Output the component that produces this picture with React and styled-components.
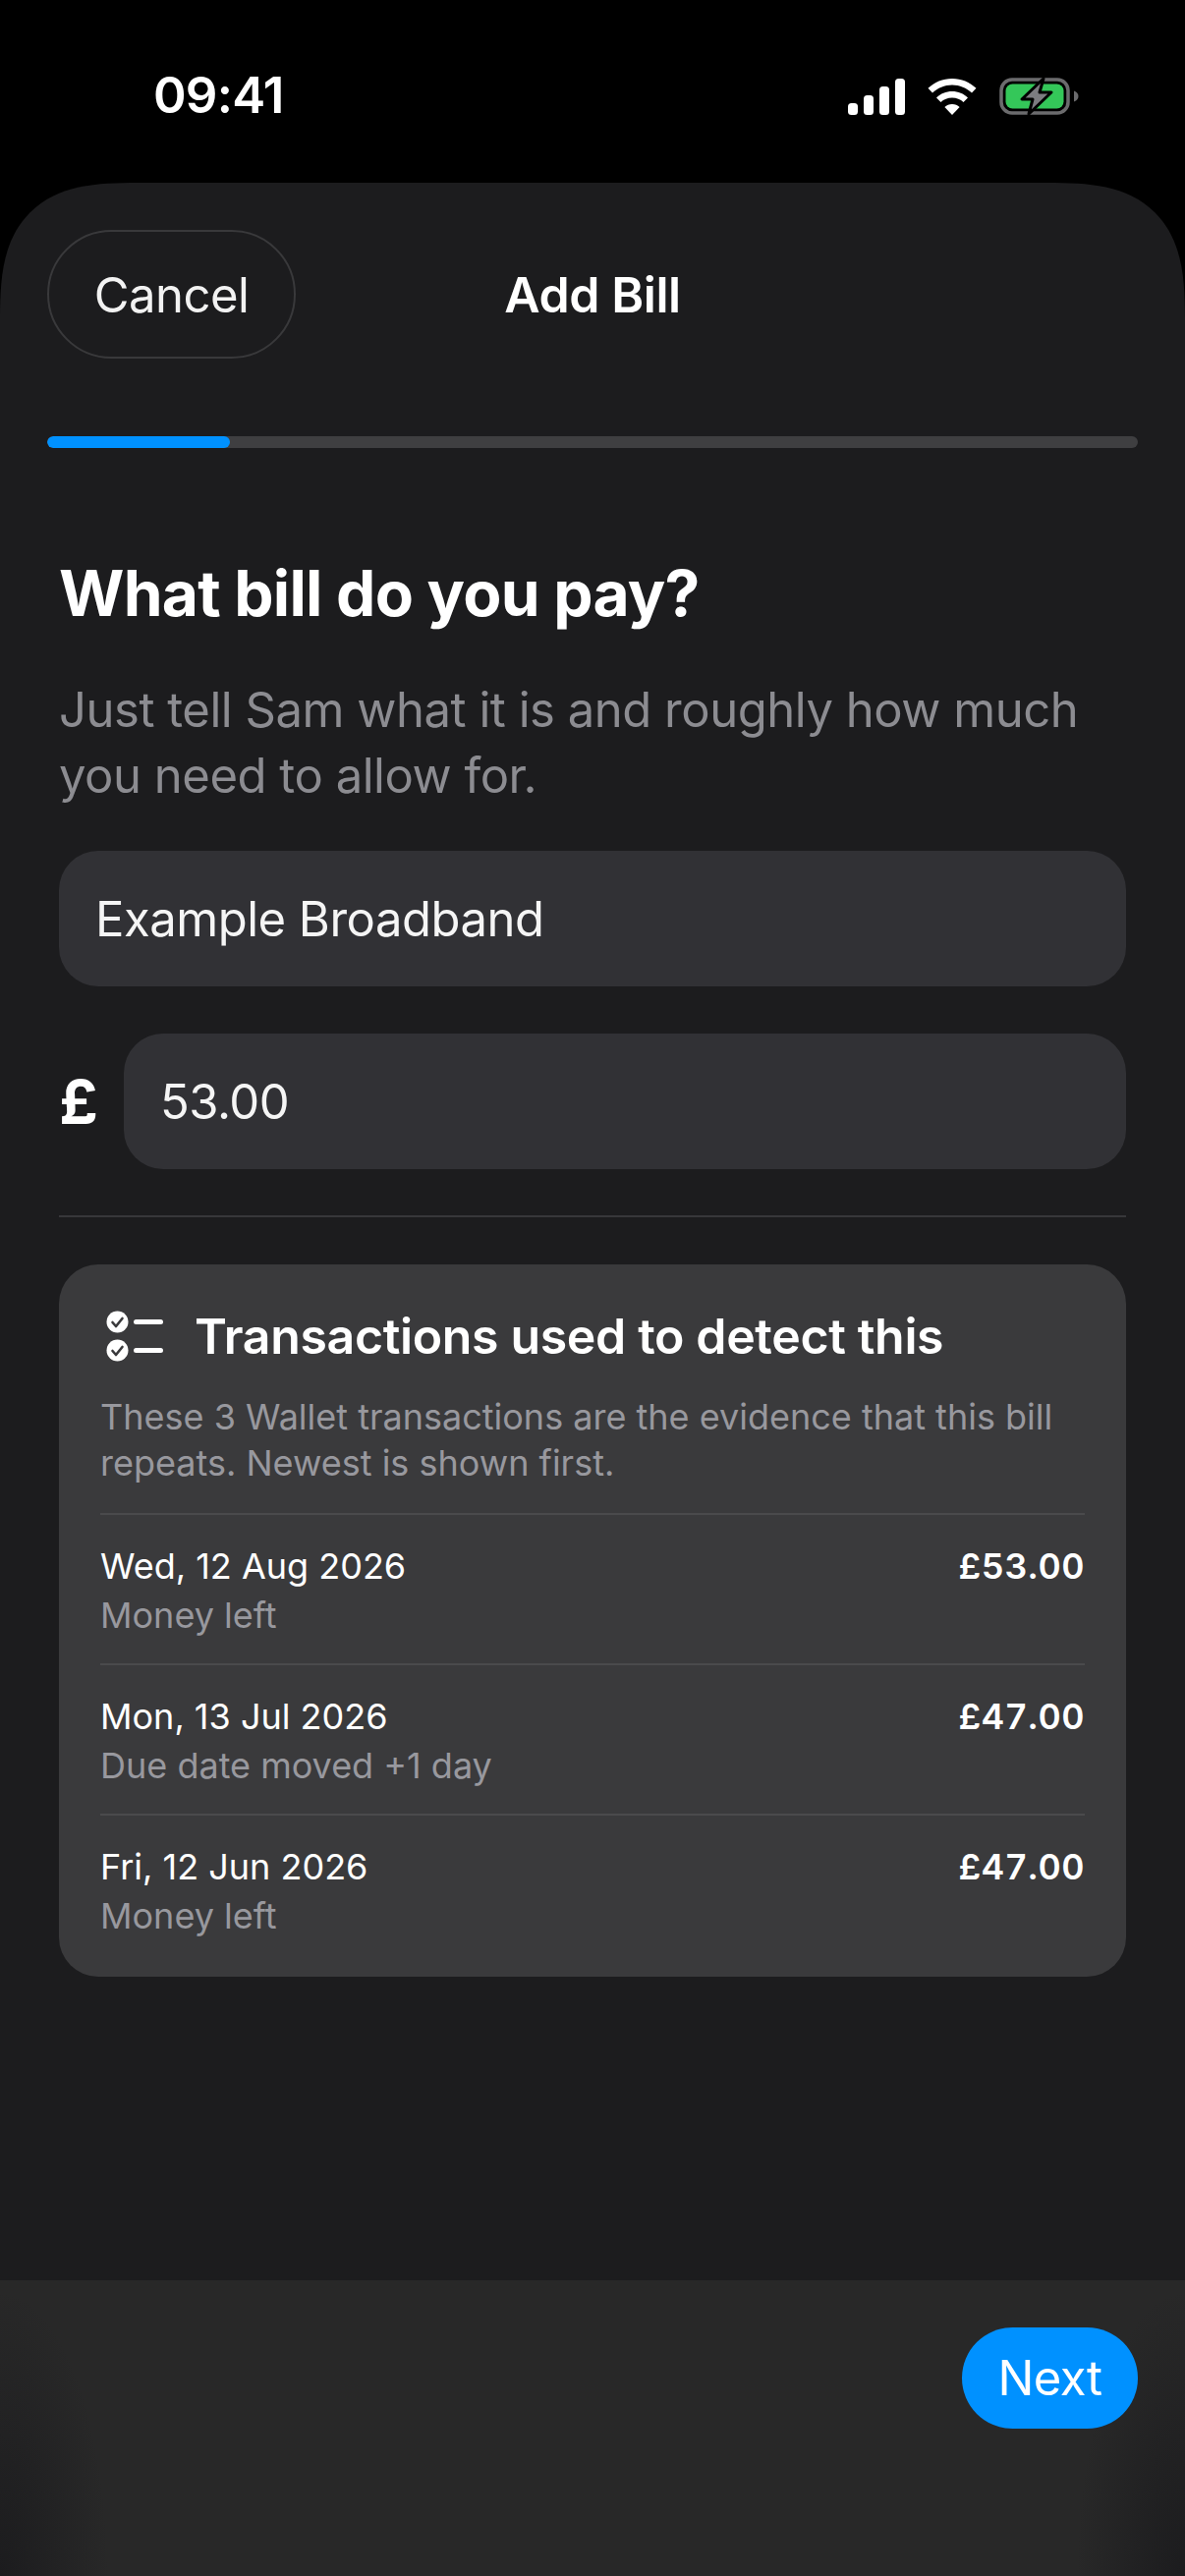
import React from 'react';
import styled, { createGlobalStyle } from 'styled-components';

const Global = createGlobalStyle`
    html, body { margin:0; padding:0; background:#000; }
    * { box-sizing:border-box; }
`

const rows = [
    { date: 'Wed, 12 Aug 2026', note: 'Money left', amount: '£53.00' },
    { date: 'Mon, 13 Jul 2026', note: 'Due date moved +1 day', amount: '£47.00' },
    { date: 'Fri, 12 Jun 2026', note: 'Money left', amount: '£47.00' },
];

const Signal = () => (
    <svg width="58" height="37" viewBox="0 0 58 37" fill="#fff">
        <rect x="0" y="25" width="10" height="12" rx="3.5" />
        <rect x="16" y="17" width="10" height="20" rx="3.5" />
        <rect x="32" y="8" width="10" height="29" rx="3.5" />
        <rect x="48" y="0" width="10" height="37" rx="3.5" />
    </svg>
);

const Wifi = () => (
    <svg width="50" height="37" viewBox="0 0 50 37" fill="#fff">
        <path d="M25 0C34.5 0 43 3.7 49.5 9.8L45 14.5C39.7 9.5 32.7 6.4 25 6.4S10.3 9.5 5 14.5L.5 9.8C7 3.7 15.5 0 25 0Z" />
        <path d="M25 13C31.2 13 36.8 15.4 41 19.4L36.5 24C33.5 21.200 29.500 19.500 25 19.500S16.500 21.200 13.500 24L9 19.400C13.200 15.400 18.800 13 25 13Z" />
        <path d="M25 26C28 26 30.600 27.100 32.600 29L25 37L17.400 29C19.400 27.100 22 26 25 26Z" />
    </svg>
);

const Battery = () => (
    <svg width="82" height="40" viewBox="0 0 82 40">
        <rect x="2" y="3" width="68" height="34" rx="11" fill="none" stroke="#6b6b6d" strokeWidth="3.500" />
        <rect x="6.500" y="7.500" width="59" height="25" rx="7" fill="#34c759" />
        <path d="M76 14.500c3 1 4.500 3 4.500 5.500s-1.500 4.500-4.500 5.500Z" fill="#6b6b6d" />
        <path d="M45 2 23 23H34L30 38 53 16H41Z" fill="#7c7c80" stroke="#000" strokeWidth="3" strokeLinejoin="round" />
    </svg>
);

const ChecklistIcon = () => (
    <svg width="58" height="52" viewBox="0 0 58 52">
        <circle cx="11.500" cy="11.500" r="11" fill="#fff" />
        <path d="M6.500 12l3.500 4 6.500-8" fill="none" stroke="#3a3a3c" strokeWidth="2.600" strokeLinecap="round" strokeLinejoin="round" />
        <circle cx="11.500" cy="40.500" r="11" fill="#fff" />
        <path d="M6.500 41l3.500 4 6.500-8" fill="none" stroke="#3a3a3c" strokeWidth="2.600" strokeLinecap="round" strokeLinejoin="round" />
        <rect x="28" y="9" width="30" height="5" rx="2.500" fill="#fff" />
        <rect x="28" y="38" width="30" height="5" rx="2.500" fill="#fff" />
    </svg>
);

export default function App() {
    return (
        <Page>
            <Global />
            <StatusBar>
                <Time>09:41</Time>
                <StatusIcons>
                    <Signal />
                    <Wifi />
                    <Battery />
                </StatusIcons>
            </StatusBar>
            <Sheet>
                <Header>
                    <CancelButton>Cancel</CancelButton>
                    <HeaderTitle>Add Bill</HeaderTitle>
                </Header>
                <ProgressTrack>
                    <ProgressFill />
                </ProgressTrack>
                <Content>
                    <Title>What bill do you pay?</Title>
                    <Lead>Just tell Sam what it is and roughly how much you need to allow for.</Lead>
                    <Field>Example Broadband</Field>
                    <AmountRow>
                        <Currency>£</Currency>
                        <AmountField>53.00</AmountField>
                    </AmountRow>
                    <Divider />
                    <Card>
                        <CardHeader>
                            <ChecklistIcon />
                            <CardTitle>Transactions used to detect this</CardTitle>
                        </CardHeader>
                        <CardText>These 3 Wallet transactions are the evidence that this bill repeats. Newest is shown first.</CardText>
                        {rows.map((row) => (
                            <Row key={row.date}>
                                <div>
                                    <RowDate>{row.date}</RowDate>
                                    <RowNote>{row.note}</RowNote>
                                </div>
                                <RowAmount>{row.amount}</RowAmount>
                            </Row>
                        ))}
                    </Card>
                </Content>
                <Footer>
                    <NextButton>Next</NextButton>
                </Footer>
            </Sheet>
        </Page>
    );
}

const Page = styled.div`
    width:1206px; height:2622px; display:flex; flex-direction:column; overflow:hidden;
    background:#000; color:#fff; font-family:Inter, "Liberation Sans", sans-serif;
`
const StatusBar = styled.div`
    height:186px; flex:none; display:flex; justify-content:space-between; align-items:flex-start;
    padding:66px 107px 0 156px;
`
const Time = styled.div`
    font-size:51px; line-height:62px; font-weight:600; letter-spacing:-0.8px;
`
const StatusIcons = styled.div`
    display:flex; align-items:center; gap:23px; padding-top:12px;
`
const Sheet = styled.div`
    flex:1; display:flex; flex-direction:column; min-height:0; background:#1c1c1e;
    border-radius:140px 140px 0 0; corner-shape:superellipse(1.5); overflow:hidden;
`
const Header = styled.div`
    display:grid; grid-template-columns:1fr auto 1fr; align-items:center;
    padding:48px 48px 0;
`
const CancelButton = styled.button`
    width:253px; height:131px; justify-self:start; border-radius:66px; padding:2px 0 0;
    background:transparent; border:2px solid #39393b; color:#f2f2f2;
    font:400 49px Inter, "Liberation Sans", sans-serif; letter-spacing:-0.5px;
`
const HeaderTitle = styled.div`
    font-size:50px; font-weight:600; letter-spacing:-0.4px;
`
const ProgressTrack = styled.div`
    height:12px; margin:79px 48px 0; border-radius:6px; background:#3f3f41; overflow:hidden;
`
const ProgressFill = styled.div`
    width:186px; height:100%; border-radius:6px; background:#0091ff;
`
const Content = styled.div`
    flex:1; display:flex; flex-direction:column; padding:110px 60px 0;
`
const Title = styled.h1`
    margin:0; font-size:64px; line-height:76px; font-weight:700; letter-spacing:-0.75px;
`
const Lead = styled.p`
    margin:47px 0 43px; font-size:49px; line-height:67px; color:#8c8c91; letter-spacing:-0.47px;
`
const Field = styled.div`
    height:138px; display:flex; align-items:center; padding:0 37px;
    border-radius:40px; background:#313135; font-size:49px; letter-spacing:-0.5px; color:#f5f5f5;
`
const AmountField = styled(Field)`
    flex:1;
`
const AmountRow = styled.div`
    display:flex; align-items:center; gap:26px; margin-top:48px;
`
const Currency = styled.div`
    width:40px; font-size:62px; font-weight:700; text-align:center;
`
const Divider = styled.div`
    height:2px; margin-top:47px; background:#37373a;
`
const Card = styled.section`
    margin-top:48px; padding:43px 42px 13px; border-radius:40px; background:#3a3a3c;
`
const CardHeader = styled.div`
    display:flex; align-items:center; gap:32px; padding-left:6px;
`
const CardTitle = styled.h2`
    margin:0; font-size:50px; line-height:60px; font-weight:600; letter-spacing:-0.35px;
`
const CardText = styled.p`
    margin:29px 0 27px; font-size:36px; line-height:47px; color:#98989e;
`
const Row = styled.div`
    height:153px; display:flex; justify-content:space-between; align-items:flex-start;
    padding-top:27px; border-top:2px solid #4a4a4c;
`
const RowDate = styled.div`
    font-size:36px; line-height:50px; color:#fff;
`
const RowNote = styled.div`
    font-size:36px; line-height:50px; color:#98989e;
`
const RowAmount = styled.div`
    font-size:36px; line-height:50px; font-weight:600; letter-spacing:0.5px;
    font-variant-numeric:tabular-nums;
`
const Footer = styled.div`
    height:301px; flex:none; display:flex; justify-content:flex-end; align-items:flex-start;
    margin-top:auto; padding:48px 48px 0;
    background:
        radial-gradient(110px 290px at 0 100%, #1c1c1e, transparent),
        radial-gradient(110px 290px at 100% 100%, #1c1c1e, transparent),
        #282828;
`
const NextButton = styled.button`
    width:179px; height:103px; border:0; border-radius:52px; background:#0091ff; color:#fff;
    font:400 49px Inter, "Liberation Sans", sans-serif; letter-spacing:-0.5px;
`
